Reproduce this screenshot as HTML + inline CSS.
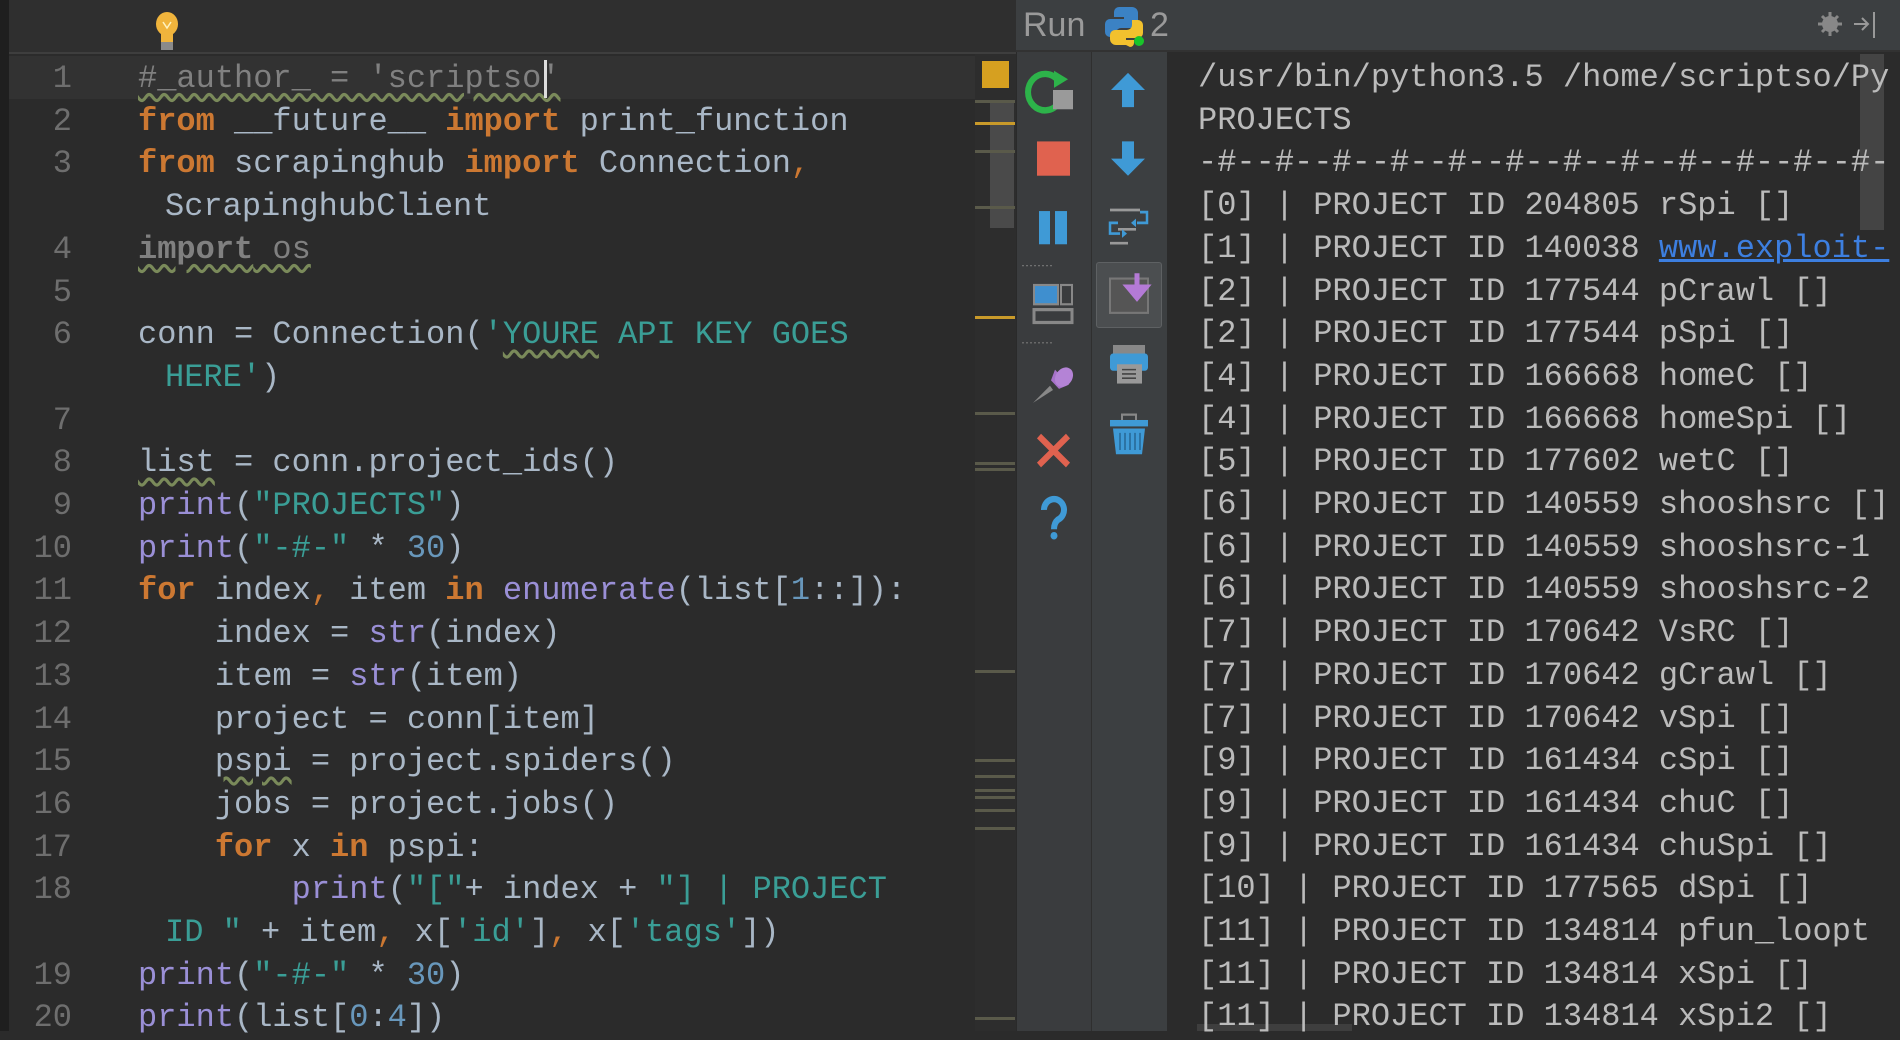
<!DOCTYPE html>
<html><head><meta charset="utf-8"><style>
*{margin:0;padding:0;box-sizing:border-box}
body{width:1900px;height:1031px;overflow:hidden;background:#2b2b2b;position:relative;font-family:"Liberation Mono",monospace}
.abs{position:absolute}
.ln{position:absolute;left:0;width:72px;text-align:right;color:#6e6e6e;font-size:32px;line-height:42.7px;height:42.7px}
.cd{position:absolute;left:138px;font-size:32px;line-height:42.7px;height:42.7px;color:#a9b7c6;white-space:pre}
.k{color:#cc7832;font-weight:bold}
.s{color:#3a9e96}
.b{color:#9a8fd6}
.n{color:#6897bb}
.c{color:#808080}
.w{text-decoration:underline wavy #7a8a5a;text-underline-offset:6px}
.con{position:absolute;left:1198px;font-size:32px;line-height:42.7px;height:42.7px;color:#bbbbbb;white-space:pre}
.mk{position:absolute;left:975px;width:40px;height:3px;background:#5a5a4a}
.ed{position:absolute;left:0;top:58px;width:1016px;height:980px}
.cs{position:absolute;left:0;top:57px;width:1900px;height:980px}
</style></head><body>
<div class="abs" style="left:0;top:0;width:9px;height:1031px;background:#1f1f1f"></div>
<div class="abs" style="left:9px;top:0;width:1007px;height:54px;background:#2f2f2f;border-bottom:2px solid #3e3e3e"></div>
<svg class="abs" style="left:152px;top:10px" width="30" height="46" viewBox="0 0 30 46"><ellipse cx="15" cy="14" rx="11" ry="12" fill="#f0b43c"/><rect x="9" y="22" width="12" height="10" fill="#f0b43c"/><rect x="9" y="32" width="12" height="8" fill="#8a8a8a"/><path d="M11 12 l4 6 l4-6" stroke="#fff3c0" fill="none" stroke-width="1.5"/></svg>
<div class="abs" style="left:9px;top:56px;width:966px;height:43px;background:#323232"></div>

<div class="ed">
<div class="ln" style="top:0px">1</div>
<div class="ln" style="top:42.7px">2</div>
<div class="ln" style="top:85.4px">3</div>
<div class="ln" style="top:170.8px">4</div>
<div class="ln" style="top:213.5px">5</div>
<div class="ln" style="top:256.2px">6</div>
<div class="ln" style="top:341.6px">7</div>
<div class="ln" style="top:384.3px">8</div>
<div class="ln" style="top:427px">9</div>
<div class="ln" style="top:469.7px">10</div>
<div class="ln" style="top:512.4px">11</div>
<div class="ln" style="top:555.1px">12</div>
<div class="ln" style="top:597.8px">13</div>
<div class="ln" style="top:640.5px">14</div>
<div class="ln" style="top:683.2px">15</div>
<div class="ln" style="top:725.9px">16</div>
<div class="ln" style="top:768.6px">17</div>
<div class="ln" style="top:811.3px">18</div>
<div class="ln" style="top:896.7px">19</div>
<div class="ln" style="top:939.4px">20</div>

<div class="cd c" style="top:0px"><span class="w">#_author_ = 'scriptso'</span></div>
<div class="abs" style="left:544px;top:2px;width:3px;height:38px;background:#dddddd"></div>
<div class="cd" style="top:42.7px"><span class="k">from</span> __future__ <span class="k">import</span> print_function</div>
<div class="cd" style="top:85.4px"><span class="k">from</span> scrapinghub <span class="k">import</span> Connection<span class="k" style="font-weight:normal">,</span></div>
<div class="cd" style="top:128.1px;left:165px">ScrapinghubClient</div>
<div class="cd" style="top:170.8px;color:#808080"><span class="w"><b>import</b> os</span></div>
<div class="cd" style="top:256.2px">conn = Connection(<span class="s">'<span class="w">YOURE</span> API KEY GOES</span></div>
<div class="cd" style="top:298.9px;left:165px"><span class="s">HERE'</span>)</div>
<div class="cd" style="top:384.3px"><span class="w">list</span> = conn.project_ids()</div>
<div class="cd" style="top:427px"><span class="b">print</span>(<span class="s">"PROJECTS"</span>)</div>
<div class="cd" style="top:469.7px"><span class="b">print</span>(<span class="s">"-#-"</span> * <span class="n">30</span>)</div>
<div class="cd" style="top:512.4px"><span class="k">for</span> index<span class="k" style="font-weight:normal">,</span> item <span class="k">in</span> <span class="b">enumerate</span>(list[<span class="n">1</span>::]):</div>
<div class="cd" style="top:555.1px">    index = <span class="b">str</span>(index)</div>
<div class="cd" style="top:597.8px">    item = <span class="b">str</span>(item)</div>
<div class="cd" style="top:640.5px">    project = conn[item]</div>
<div class="cd" style="top:683.2px">    <span class="w">pspi</span> = project.spiders()</div>
<div class="cd" style="top:725.9px">    jobs = project.jobs()</div>
<div class="cd" style="top:768.6px">    <span class="k">for</span> x <span class="k">in</span> pspi:</div>
<div class="cd" style="top:811.3px">        <span class="b">print</span>(<span class="s">"["</span>+ index + <span class="s">"] | PROJECT</span></div>
<div class="cd" style="top:854px;left:165px"><span class="s">ID "</span> + item<span class="k" style="font-weight:normal">,</span> x[<span class="s">'id'</span>]<span class="k" style="font-weight:normal">,</span> x[<span class="s">'tags'</span>])</div>
<div class="cd" style="top:896.7px"><span class="b">print</span>(<span class="s">"-#-"</span> * <span class="n">30</span>)</div>
<div class="cd" style="top:939.4px"><span class="b">print</span>(list[<span class="n">0</span>:<span class="n">4</span>])</div>
</div>

<div class="abs" style="left:975px;top:54px;width:41px;height:977px;background:#2d2d2d"></div>
<div class="abs" style="left:982px;top:61px;width:27px;height:27px;background:#d6a020"></div>
<div class="abs" style="left:990px;top:100px;width:24px;height:128px;background:#4a4a4a"></div>
<div class="mk" style="top:100px"></div>
<div class="mk" style="top:122px;background:#c99a2a"></div>
<div class="mk" style="top:150px"></div>
<div class="mk" style="top:206px"></div>
<div class="mk" style="top:316px;background:#c99a2a"></div>
<div class="mk" style="top:412px"></div>
<div class="mk" style="top:462px"></div>
<div class="mk" style="top:468px"></div>
<div class="mk" style="top:670px"></div>
<div class="mk" style="top:759px"></div>
<div class="mk" style="top:775px"></div>
<div class="mk" style="top:789px"></div>
<div class="mk" style="top:796px"></div>
<div class="mk" style="top:809px"></div>
<div class="mk" style="top:827px"></div>
<div class="mk" style="top:1017px"></div>

<div class="abs" style="left:1016px;top:0;width:884px;height:52px;background:#3c3f41;border-bottom:2px solid #323232"></div>
<div class="abs" style="left:1023px;top:2px;font-family:'Liberation Sans',sans-serif;font-size:34px;color:#9a9a9a;line-height:46px">Run</div>
<svg class="abs" style="left:1102px;top:4px" width="44" height="44" viewBox="0 0 44 44"><path d="M20 3 h10 a6 6 0 0 1 6 6 v10 a5 5 0 0 1 -5 5 h-12 a5 5 0 0 0 -5 5 v4 h-6 a5 5 0 0 1 -5 -5 v-8 a5 5 0 0 1 5 -5 h14 v-2 h-10 v-5 a5 5 0 0 1 5 -5z" fill="#3b82c4"/><path d="M24 41 h-10 a6 6 0 0 1 -6 -6 v-4 a5 5 0 0 1 5 -5 h12 a5 5 0 0 0 5 -5 v-5 h6 a5 5 0 0 1 5 5 v8 a5 5 0 0 1 -5 5 h-12 v2 h8 v3 a4 4 0 0 1 -4 4z" fill="#f2c12e"/><circle cx="37" cy="37" r="5" fill="#19c42a"/></svg>
<div class="abs" style="left:1150px;top:2px;font-family:'Liberation Sans',sans-serif;font-size:34px;color:#9a9a9a;line-height:46px">2</div>
<svg class="abs" style="left:1818px;top:8px" width="70" height="36" viewBox="0 0 70 36"><circle cx="12" cy="16" r="8" fill="#888"/><circle cx="12" cy="16" r="3" fill="#3c3f41"/><g stroke="#888" stroke-width="3"><line x1="12" y1="4" x2="12" y2="28"/><line x1="0" y1="16" x2="24" y2="16"/><line x1="4" y1="8" x2="20" y2="24"/><line x1="20" y1="8" x2="4" y2="24"/></g><path d="M36 16 h14 M44 10 l6 6 -6 6" stroke="#999" stroke-width="2" fill="none"/><line x1="56" y1="4" x2="56" y2="30" stroke="#999" stroke-width="2"/></svg>

<div class="abs" style="left:1016px;top:52px;width:75px;height:979px;background:#3a3c3e;border-left:1px solid #2a2a2a"></div>
<div class="abs" style="left:1091px;top:52px;width:76px;height:979px;background:#3c3f41;border-left:1px solid #2f2f2f"></div>
<svg class="abs" style="left:1016px;top:0" width="75" height="560" viewBox="1016 0 75 560"><g transform="scale(1 1.0714)">
 <path d="M1058 75 a17 17 0 1 0 0 22" stroke="#2db34a" stroke-width="6" fill="none"/><path d="M1054 66 l14 8 l-14 8z" fill="#2db34a"/><rect x="1053" y="84" width="20" height="18" fill="#9a9a9a"/>
 <rect x="1037" y="132" width="33" height="32" fill="#e0624f"/>
 <rect x="1039" y="197" width="11" height="31" fill="#3f9ad6"/><rect x="1055" y="197" width="12" height="31" fill="#3f9ad6"/>
 <line x1="1022" y1="248" x2="1052" y2="248" stroke="#777" stroke-dasharray="2 2"/>
 <rect x="1034" y="266" width="24" height="18" fill="#3f8fcf" stroke="#888" stroke-width="2"/><rect x="1061" y="266" width="11" height="18" fill="none" stroke="#888" stroke-width="2"/><rect x="1034" y="289" width="38" height="12" fill="none" stroke="#888" stroke-width="3"/>
 <line x1="1022" y1="320" x2="1052" y2="320" stroke="#777" stroke-dasharray="2 2"/>
 <path d="M1055 345 l14 14 l-10 4 l-8 -8z" fill="#a672c9"/><ellipse cx="1064" cy="352" rx="8" ry="10" transform="rotate(45 1064 352)" fill="#b483d6"/><path d="M1050 360 l-17 16 l20 -12z" fill="#888"/>
 <path d="M1039 407 l29 27 M1068 407 l-29 27" stroke="#e0624f" stroke-width="6"/>
 <path d="M1044 476 a10 10 0 1 1 14 9 q-4 3 -4 9" stroke="#3f9ad6" stroke-width="6" fill="none"/><circle cx="1054" cy="500" r="3.5" fill="#3f9ad6"/>
</g></svg>
<div class="abs" style="left:1096px;top:262px;width:66px;height:66px;background:#4b4e50;border:1px solid #5e6163;border-radius:3px"></div>
<svg class="abs" style="left:1091px;top:0" width="76" height="480" viewBox="1091 0 76 480"><g transform="scale(1 1.0714)">
 <path d="M1128 68 l17 16 h-11 v16 h-12 v-16 h-11z" fill="#3f9ad6"/>
 <path d="M1128 164 l17 -16 h-11 v-16 h-12 v16 h-11z" fill="#3f9ad6"/>
 <g stroke="#999" stroke-width="2.5"><line x1="1110" y1="196" x2="1140" y2="196"/><line x1="1118" y1="214" x2="1136" y2="214"/><line x1="1110" y1="227" x2="1128" y2="227"/></g>
 <path d="M1140 198 h7 v10 h-10 M1118 208 h-8 v10 h10" stroke="#3f9ad6" stroke-width="2.5" fill="none"/><path d="M1136 204 l-5 4 l5 4z M1122 214 l5 4 l-5 4z" fill="#3f9ad6"/>
 <rect x="1110" y="260" width="38" height="32" fill="#555" stroke="#777" stroke-width="2"/><path d="M1137 255 v20 M1128 268 l9 10 l9 -10z" stroke="#b47ad6" stroke-width="5" fill="#b47ad6"/>
 <rect x="1113" y="322" width="32" height="8" fill="#888"/><rect x="1110" y="330" width="38" height="16" rx="3" fill="#3f9ad6"/><rect x="1117" y="340" width="25" height="18" fill="#999"/><path d="M1122 345 h14 M1122 349 h14 M1122 353 h14" stroke="#444" stroke-width="1.5"/>
 <rect x="1110" y="392" width="38" height="6" fill="#3f9ad6"/><path d="M1122 392 v-5 h14 v5" stroke="#888" stroke-width="2" fill="none"/><path d="M1113 400 h32 l-3 24 h-26z" fill="#3f9ad6"/><path d="M1120 404 v16 M1125 404 v16 M1130 404 v16 M1135 404 v16 M1140 404 v16" stroke="#2a6f9e" stroke-width="1.8"/>
</g></svg>

<div class="abs" style="left:1167px;top:52px;width:733px;height:979px;background:#2b2b2b"></div>
<div class="abs" style="left:1860px;top:54px;width:24px;height:176px;background:#444"></div>
<div class="abs" style="left:1197px;top:1024px;width:155px;height:7px;background:#3e3e3e"></div>
<div class="cs">
<div class="con" style="top:0px">/usr/bin/python3.5 /home/scriptso/Py</div>
<div class="con" style="top:42.7px">PROJECTS</div>
<div class="con" style="top:85.4px">-#--#--#--#--#--#--#--#--#--#--#--#-</div>
<div class="con" style="top:128.1px">[0] | PROJECT ID 204805 rSpi []</div>
<div class="con" style="top:170.8px">[1] | PROJECT ID 140038 <span style="color:#3d7fe0;text-decoration:underline">www.exploit-</span></div>
<div class="con" style="top:213.5px">[2] | PROJECT ID 177544 pCrawl []</div>
<div class="con" style="top:256.2px">[2] | PROJECT ID 177544 pSpi []</div>
<div class="con" style="top:298.9px">[4] | PROJECT ID 166668 homeC []</div>
<div class="con" style="top:341.6px">[4] | PROJECT ID 166668 homeSpi []</div>
<div class="con" style="top:384.3px">[5] | PROJECT ID 177602 wetC []</div>
<div class="con" style="top:427px">[6] | PROJECT ID 140559 shooshsrc []</div>
<div class="con" style="top:469.7px">[6] | PROJECT ID 140559 shooshsrc-1</div>
<div class="con" style="top:512.4px">[6] | PROJECT ID 140559 shooshsrc-2</div>
<div class="con" style="top:555.1px">[7] | PROJECT ID 170642 VsRC []</div>
<div class="con" style="top:597.8px">[7] | PROJECT ID 170642 gCrawl []</div>
<div class="con" style="top:640.5px">[7] | PROJECT ID 170642 vSpi []</div>
<div class="con" style="top:683.2px">[9] | PROJECT ID 161434 cSpi []</div>
<div class="con" style="top:725.9px">[9] | PROJECT ID 161434 chuC []</div>
<div class="con" style="top:768.6px">[9] | PROJECT ID 161434 chuSpi []</div>
<div class="con" style="top:811.3px">[10] | PROJECT ID 177565 dSpi []</div>
<div class="con" style="top:854px">[11] | PROJECT ID 134814 pfun_loopt</div>
<div class="con" style="top:896.7px">[11] | PROJECT ID 134814 xSpi []</div>
<div class="con" style="top:939.4px">[11] | PROJECT ID 134814 xSpi2 []</div>
</div>
</body></html>
